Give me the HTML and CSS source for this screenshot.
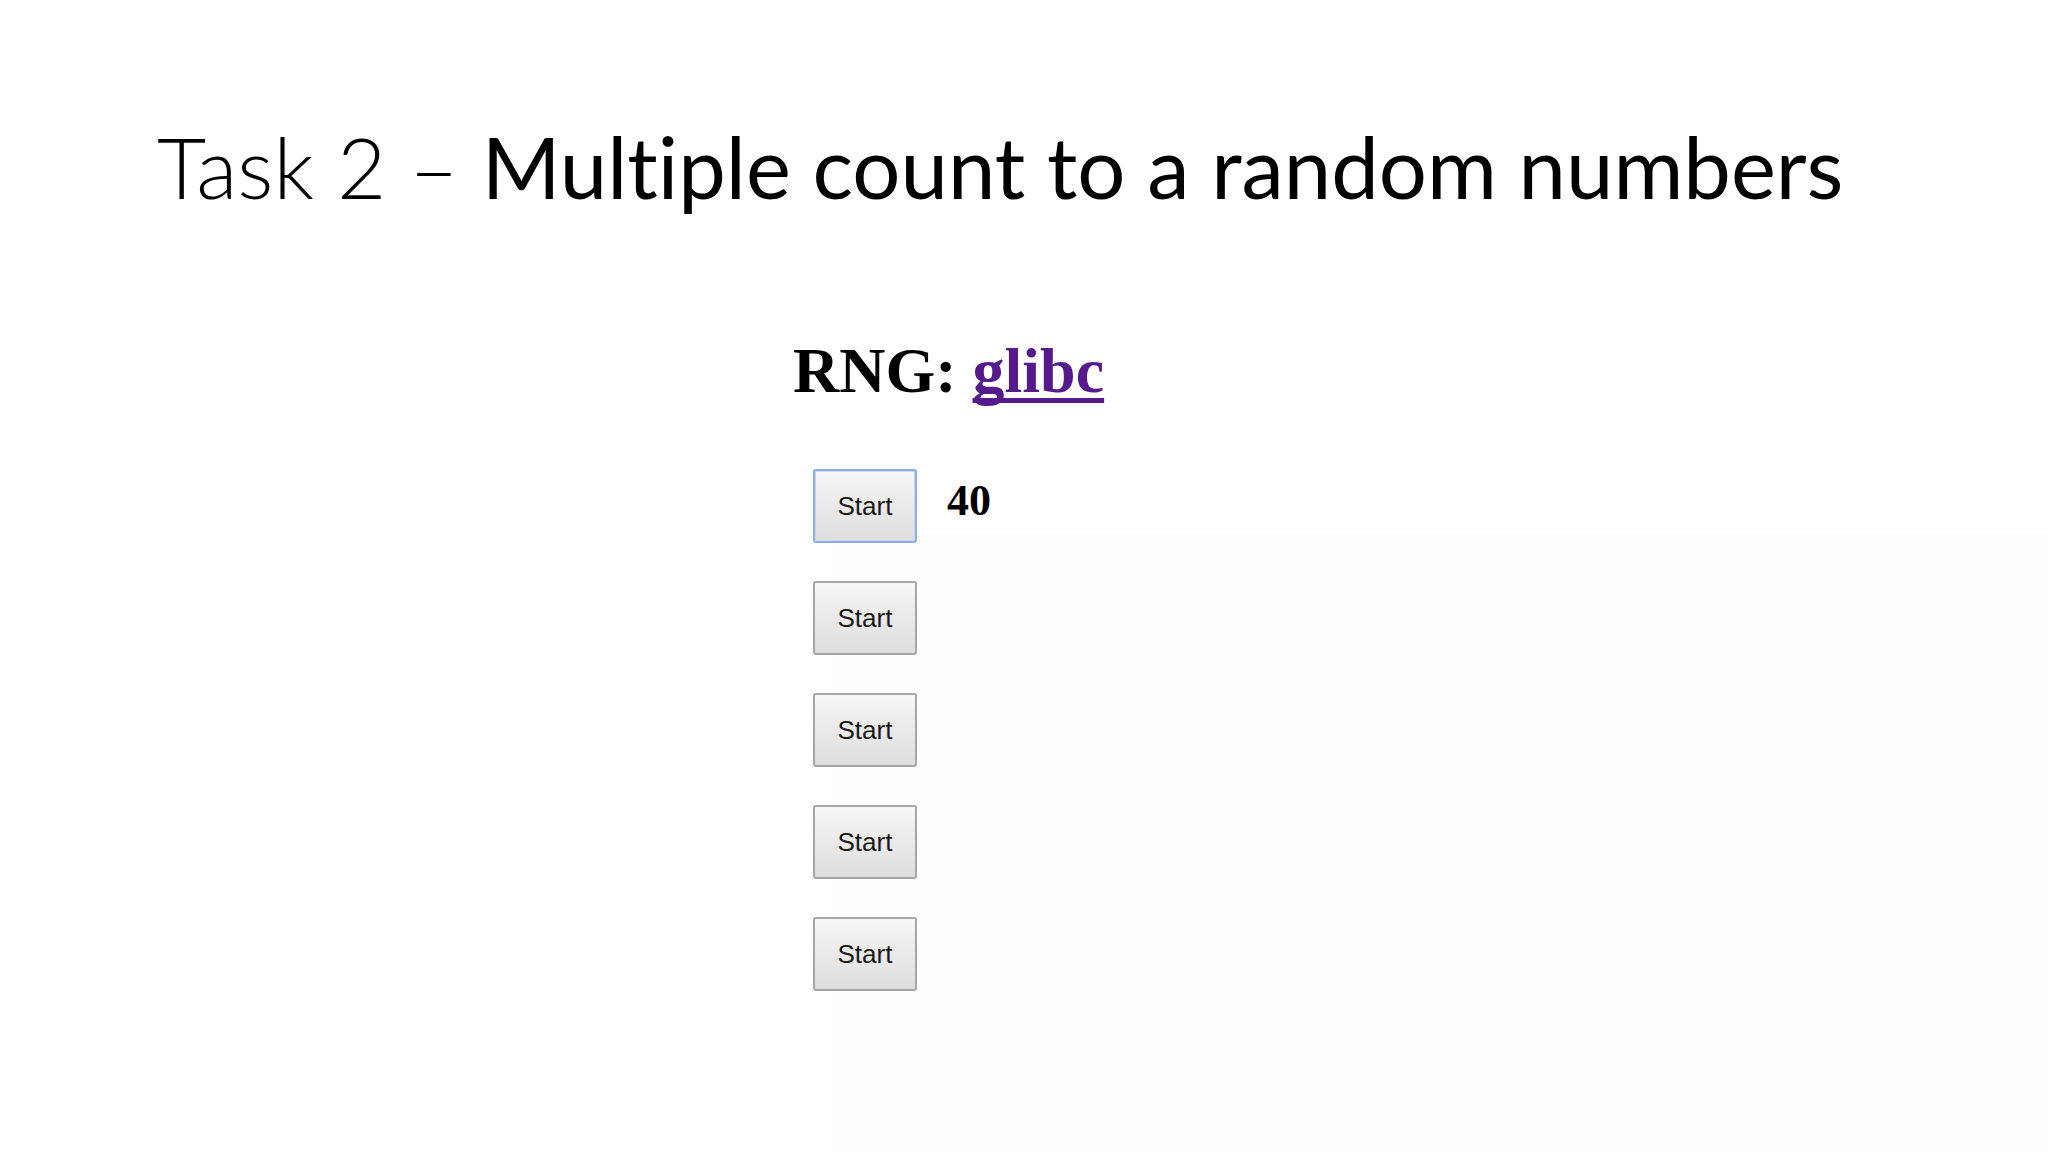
FILE: index.html
```html
<!DOCTYPE html>
<html lang="en">
<head>
    <meta charset="UTF-8">
    <meta name="viewport" content="width=device-width, initial-scale=1.0">
    <title>Task 2</title>
    <link rel="stylesheet" href="styles.css">
</head>
<body>

    <div class="slide">
        <h1 class="slide-title"><span class="light">Task 2 – </span>Multiple count to a random numbers</h1>

        <div class="demo">
            <h2 class="rng">RNG: <a href="#" class="rng-link">glibc</a></h2>
            <ul class="counters">
                <li class="counter"><button class="start focused">Start</button><span class="count">40</span></li>
                <li class="counter"><button class="start">Start</button><span class="count"></span></li>
                <li class="counter"><button class="start">Start</button><span class="count"></span></li>
                <li class="counter"><button class="start">Start</button><span class="count"></span></li>
                <li class="counter"><button class="start">Start</button><span class="count"></span></li>
            </ul>
        </div>
    </div>

</body>
</html>
```

FILE: styles.css
```css
html, body {
    height: 100%;
}

body {
    margin: 0;
    background-color: #fff;
    background-image: linear-gradient(#fdfdfd, #fdfdfd);
    background-repeat: no-repeat;
    background-position: right bottom;
    background-size: 1216px 619px;
    color: #000;
    overflow: hidden;
}

.slide {
    padding: 124px 0 0 157px;
}

.slide-title {
    margin: 0;
    font-family: Lato, "Open Sans", sans-serif;
    font-weight: 400;
    font-size: 85px;
    line-height: 85px;
    font-variant-ligatures: none;
    white-space: nowrap;
}

.light {
    font-weight: 300;
}

.demo {
    margin-top: 130px;
    padding-left: 636px;
}

.rng {
    margin: 0;
    font-family: "Liberation Serif", "Times New Roman", serif;
    font-weight: bold;
    font-size: 64px;
    line-height: 64px;
}

.rng-link {
    color: #551a8b;
    text-decoration: underline;
    text-decoration-thickness: 5px;
    text-underline-offset: 6px;
    text-decoration-skip-ink: none;
}

.counters {
    list-style: none;
    margin: 66px 0 0;
    padding: 0 0 0 20px;
    display: flex;
    flex-direction: column;
    gap: 38px;
}

.counter {
    display: flex;
    align-items: baseline;
    gap: 30px;
    height: 74px;
}

.start {
    width: 104px;
    height: 74px;
    padding: 0;
    font-family: "Liberation Sans", Arial, sans-serif;
    font-size: 26px;
    color: #1a1a1a;
    background: linear-gradient(#f7f7f7, #dddddd);
    border: 2px solid #a6a6a6;
    border-radius: 3px;
    cursor: pointer;
}

.start.focused {
    border-color: #8eaee0;
    box-shadow: inset 0 0 0 1px #c9d8f2;
}

.count {
    font-family: "Liberation Serif", "Times New Roman", serif;
    font-weight: bold;
    font-size: 44px;
    line-height: 44px;
}
```
